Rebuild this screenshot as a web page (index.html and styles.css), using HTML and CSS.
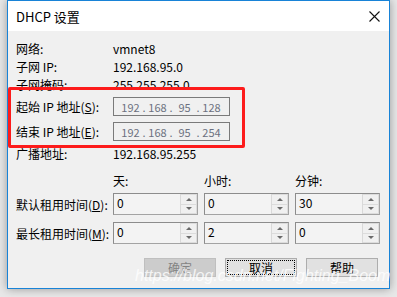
FILE: index.html
```html
<!DOCTYPE html>
<html>
<head>
    <title>DHCP 设置</title>
    <link rel="stylesheet" href="styles.css">
</head>
<body>
    <div class="dialog">
        <div class="titlebar">
            <span class="title">DHCP 设置</span>
            <svg class="close" width="11" height="11" viewBox="0 0 11 11">
                <path d="M0.5 0.5 L10.5 10.5 M10.5 0.5 L0.5 10.5" stroke="#111" stroke-width="1.1" fill="none"/>
            </svg>
        </div>

        <div class="content">
            <div class="row"><span>网络:</span><span>vmnet8</span></div>
            <div class="row"><span>子网 IP:</span><span>192.168.95.0</span></div>
            <div class="row"><span>子网掩码:</span><span>255.255.255.0</span></div>

            <div class="row ip first">
                <span>起始 IP 地址(<u>S</u>):</span>
                <div class="ipbox">
                    <span class="oct">192</span><span class="dot">.</span>
                    <span class="oct">168</span><span class="dot">.</span>
                    <span class="oct">95</span><span class="dot">.</span>
                    <span class="oct">128</span>
                </div>
            </div>
            <div class="row ip second">
                <span>结束 IP 地址(<u>E</u>):</span>
                <div class="ipbox">
                    <span class="oct">192</span><span class="dot">.</span>
                    <span class="oct">168</span><span class="dot">.</span>
                    <span class="oct">95</span><span class="dot">.</span>
                    <span class="oct">254</span>
                </div>
            </div>

            <div class="row bcast"><span>广播地址:</span><span>192.168.95.255</span></div>

            <div class="lease heads">
                <span></span><span>天:</span><span>小时:</span><span>分钟:</span>
            </div>
            <div class="lease spinrow first">
                <span>默认租用时间(<u>D</u>):</span>
                <div class="spin"><span class="num">0</span><div class="arrows"><i class="up"></i><i class="down"></i></div></div>
                <div class="spin"><span class="num">0</span><div class="arrows"><i class="up"></i><i class="down"></i></div></div>
                <div class="spin"><span class="num">30</span><div class="arrows"><i class="up"></i><i class="down"></i></div></div>
            </div>
            <div class="lease spinrow second">
                <span>最长租用时间(<u>M</u>):</span>
                <div class="spin"><span class="num">0</span><div class="arrows"><i class="up"></i><i class="down"></i></div></div>
                <div class="spin"><span class="num">2</span><div class="arrows"><i class="up"></i><i class="down"></i></div></div>
                <div class="spin"><span class="num">0</span><div class="arrows"><i class="up"></i><i class="down"></i></div></div>
            </div>

            <div class="buttons">
                <button class="btn disabled">确定</button>
                <button class="btn focused"><span>取消</span></button>
                <button class="btn">帮助</button>
            </div>
        </div>

        <div class="highlight"></div>
        <div class="watermark">https://blog.csdn.net/Fighting_Boom</div>
    </div>
</body>
</html>
```

FILE: styles.css
```css
body {
    margin: 0;
    width: 397px;
    height: 297px;
    overflow: hidden;
    background: #e8e8e8;
    font-family: "Noto Sans CJK SC", "Noto Sans", sans-serif;
    font-size: 12px;
    color: #000;
}
.dialog {
    position: relative;
    margin-left: 7px;
    width: 381px;
    height: 287px;
    border: 1px solid #1883d7;
    background: #f0f0f0;
    box-shadow: 0 0 9px rgba(0, 0, 0, 0.35);
}
.titlebar {
    height: 30px;
    background: #fff;
    display: flex;
    align-items: center;
    justify-content: space-between;
    padding: 0 9px 0 8px;
}
.title {
    font-size: 13px;
}
.content {
    padding: 8px 0 0 8px;
}
.row {
    display: grid;
    grid-template-columns: 97px auto;
    align-items: center;
    height: 18px;
    white-space: nowrap;
}
.row.ip {
    height: 19px;
}
.row.ip.first { margin-top: 4px; }
.row.ip.second { margin-top: 6px; }
.row.bcast { margin-top: 3px; }
.ipbox {
    width: 108px;
    height: 17px;
    border: 1px solid #7a7a7a;
    background: #f0f0f0;
    color: #6c7080;
    font-size: 11px;
    display: flex;
    align-items: center;
    padding-left: 7px;
}
.ipbox .oct {
    width: 19px;
    text-align: center;
}
.ipbox .dot {
    width: 8px;
    text-align: center;
}
.lease {
    display: grid;
    grid-template-columns: 91px 85px 85px 85px;
    column-gap: 6px;
    align-items: center;
    white-space: nowrap;
}
.lease.heads {
    height: 18px;
    margin-top: 9px;
}
.lease.spinrow {
    height: 22px;
}
.spinrow.first { margin-top: 4px; }
.spinrow.second { margin-top: 7px; }
.spin {
    height: 20px;
    border: 1px solid #a3a3a3;
    border-top-color: #8c8c8c;
    border-left-color: #8c8c8c;
    background: #f3f3f3;
    display: flex;
    justify-content: space-between;
}
.num {
    padding: 2px 0 0 3px;
    line-height: 14px;
}
.arrows {
    width: 16px;
    display: flex;
    flex-direction: column;
    border-left: 1px solid #d9d9d9;
}
.arrows i {
    flex: 1;
    display: flex;
    align-items: center;
    justify-content: center;
    border: 1px solid #dcdcdc;
    border-left: none;
    background: #f0f0f0;
}
.arrows i + i {
    border-top: none;
}
.arrows i::before {
    content: "";
    border-left: 3px solid transparent;
    border-right: 3px solid transparent;
}
.arrows .up::before {
    border-bottom: 3px solid #6a6a6a;
}
.arrows .down::before {
    border-top: 3px solid #6a6a6a;
}
.buttons {
    display: flex;
    gap: 9px;
    margin-top: 14px;
    padding-left: 128px;
}
.btn {
    width: 72px;
    height: 19px;
    padding: 0;
    border: 1px solid #adadad;
    background: #e1e1e1;
    font-family: inherit;
    font-size: 12px;
    color: #000;
    display: flex;
    align-items: center;
    justify-content: center;
}
.btn.disabled {
    background: #cccccc;
    border-color: #bfbfbf;
    color: #838383;
}
.btn.focused span {
    width: 66px;
    height: 13px;
    line-height: 13px;
    border: 1px dotted #000;
}
.highlight {
    position: absolute;
    left: 0;
    top: 86px;
    width: 231px;
    height: 55px;
    border: 3px solid #fd1b1b;
    border-radius: 2px;
}
.watermark {
    position: absolute;
    left: 127px;
    top: 266px;
    font-family: "Liberation Sans", Arial, sans-serif;
    font-style: italic;
    font-size: 16px;
    color: rgba(255, 255, 255, 0.8);
    white-space: nowrap;
}
```
